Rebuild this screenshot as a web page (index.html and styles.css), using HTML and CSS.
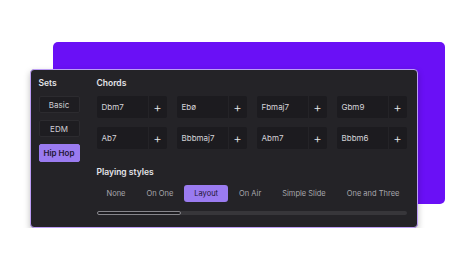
FILE: index.html
```html
<!DOCTYPE html>
<html lang="en">
<head>
  <meta charset="UTF-8">
  <meta name="viewport" content="width=device-width, initial-scale=1.0">
  <title>Chord Player</title>
  <link rel="stylesheet" href="styles.css">
</head>
<body>
<div class="stage">
  <div class="backdrop"></div>

  <div class="panel">
    <!-- Sets -->
    <div class="sets">
      <h2>Sets</h2>
      <button class="set">Basic</button>
      <button class="set">EDM</button>
      <button class="set active">Hip Hop</button>
    </div>

    <div class="main">
      <h2>Chords</h2>
      <div class="chords">
        <div class="chord"><span class="name">Dbm7</span><button class="add">+</button></div>
        <div class="chord"><span class="name">Ebø</span><button class="add">+</button></div>
        <div class="chord"><span class="name">Fbmaj7</span><button class="add">+</button></div>
        <div class="chord"><span class="name">Gbm9</span><button class="add">+</button></div>
        <div class="chord"><span class="name">Ab7</span><button class="add">+</button></div>
        <div class="chord"><span class="name">Bbbmaj7</span><button class="add">+</button></div>
        <div class="chord"><span class="name">Abm7</span><button class="add">+</button></div>
        <div class="chord"><span class="name">Bbbm6</span><button class="add">+</button></div>
      </div>

      <h2 class="styles-title">Playing styles</h2>
      <div class="tabs">
        <button class="tab">None</button>
        <button class="tab">On One</button>
        <button class="tab active">Layout</button>
        <button class="tab">On Air</button>
        <button class="tab">Simple Slide</button>
        <button class="tab">One and Three</button>
      </div>
      <div class="scroll">
        <div class="thumb"></div>
      </div>
    </div>
  </div>
</div>
</body>
</html>
```

FILE: styles.css
```css
body {
    font-family: Inter, "Noto Sans", sans-serif;
    background-color: white;
    margin: 0;
    padding: 0;
}
.stage {
    display: grid;
}
.backdrop,
.panel {
    grid-area: 1 / 1;
}
.backdrop {
    margin: 42px 0 0 53px;
    width: 392px;
    height: 162px;
    background-color: #6a10f6;
    border-radius: 5px;
}
.panel {
    margin: 69px 0 0 30px;
    width: 388px;
    height: 159px;
    box-sizing: border-box;
    background-color: #242327;
    border: 1.5px solid #bc9df5;
    border-radius: 4px;
    box-shadow: 0 3px 6px rgba(0, 0, 0, 0.25);
    padding: 8px 10px 0 7.5px;
    display: flex;
    gap: 17px;
}
h2 {
    margin: 0 0 7px;
    font-size: 8.5px;
    line-height: 11px;
    font-weight: 600;
    color: #e6e5ea;
}
button {
    font-family: inherit;
    cursor: pointer;
    border: none;
    padding: 0;
}
.sets {
    width: 41px;
    display: flex;
    flex-direction: column;
    gap: 7px;
}
.sets h2 {
    margin-bottom: 0;
}
.set {
    height: 17px;
    background-color: #1e1d21;
    border: 1px solid #2c2b2f;
    border-radius: 2px;
    color: #cfced4;
    font-size: 8px;
}
.set.active {
    height: 18px;
    background-color: #9a7bf0;
    border-color: #9a7bf0;
    color: #1d1532;
    font-weight: 600;
}
.main {
    width: 310px;
}
.chords {
    display: grid;
    grid-template-columns: repeat(4, 70px);
    gap: 9px 10px;
}
.chord {
    height: 22px;
    display: flex;
    gap: 1px;
}
.chord .name {
    flex: 1;
    background-color: #1c1b1f;
    border-radius: 2px 0 0 2px;
    color: #d6d5da;
    font-size: 8px;
    line-height: 22px;
    padding-left: 5px;
}
.chord .add {
    width: 18px;
    background-color: #1c1b1f;
    border-radius: 0 2px 2px 0;
    color: #e8e7ec;
    font-size: 13px;
    font-weight: 300;
    line-height: 22px;
}
.styles-title {
    margin-top: 18px;
}
.tabs {
    display: flex;
    gap: 1px;
}
.tab {
    height: 17px;
    padding: 0 10px;
    background-color: transparent;
    border-radius: 3px;
    color: #a9a8ae;
    font-size: 7.5px;
    white-space: nowrap;
}
.tab.active {
    background-color: #9a7bf0;
    color: #1d1532;
}
.scroll {
    margin-top: 9px;
    height: 4px;
    background-color: #37363a;
    border-radius: 2px;
    display: flex;
}
.thumb {
    width: 84px;
    box-sizing: border-box;
    border: 1px solid #87868c;
    background-color: #1d1c20;
    border-radius: 3px;
}
```
